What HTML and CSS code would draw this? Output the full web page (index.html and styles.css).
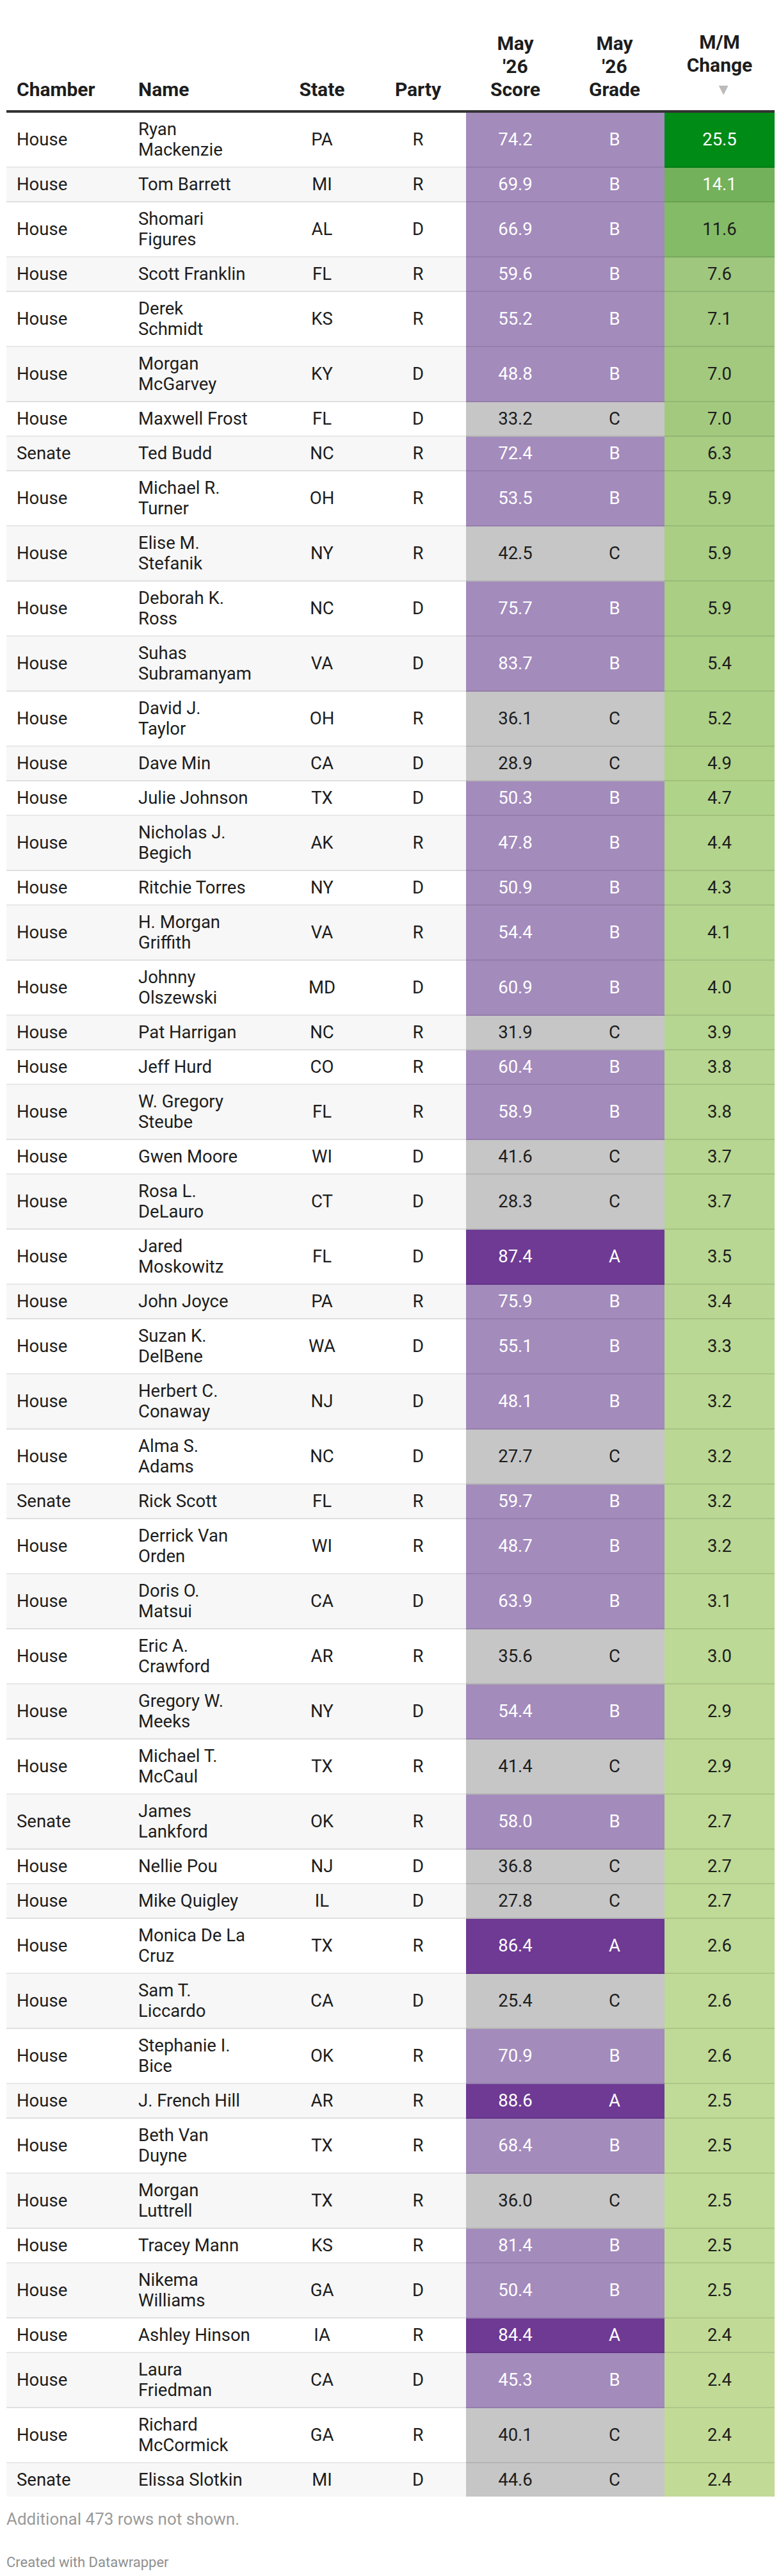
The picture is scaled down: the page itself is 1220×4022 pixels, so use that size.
FILE: index.html
```html
<!DOCTYPE html>
<html lang="en">
<head>
<meta charset="utf-8">
<title>May '26 Scores</title>
<link rel="stylesheet" href="styles.css">
</head>
<body>
<div class="chart">
<table class="dw-table">
<colgroup>
<col class="c-chamber"><col class="c-name"><col class="c-state"><col class="c-party"><col class="c-score"><col class="c-grade"><col class="c-change">
</colgroup>
<thead>
<tr>
<th class="left">Chamber</th>
<th class="left">Name</th>
<th>State</th>
<th>Party</th>
<th>May<br>'26<br>Score</th>
<th>May<br>'26<br>Grade</th>
<th>M/M<br>Change<br><span class="sort">&#9660;</span></th>
</tr>
</thead>
<tbody>
<tr><td>House</td><td class="name">Ryan<br>Mackenzie</td><td class="c">PA</td><td class="c">R</td><td class="c g-b">74.2</td><td class="c g-b">B</td><td class="c chg light" style="background:#008a16">25.5</td></tr>
<tr><td>House</td><td class="name">Tom Barrett</td><td class="c">MI</td><td class="c">R</td><td class="c g-b">69.9</td><td class="c g-b">B</td><td class="c chg light" style="background:#73b15a">14.1</td></tr>
<tr><td>House</td><td class="name">Shomari<br>Figures</td><td class="c">AL</td><td class="c">D</td><td class="c g-b">66.9</td><td class="c g-b">B</td><td class="c chg" style="background:#84bb67">11.6</td></tr>
<tr><td>House</td><td class="name">Scott Franklin</td><td class="c">FL</td><td class="c">R</td><td class="c g-b">59.6</td><td class="c g-b">B</td><td class="c chg" style="background:#9fc77e">7.6</td></tr>
<tr><td>House</td><td class="name">Derek<br>Schmidt</td><td class="c">KS</td><td class="c">R</td><td class="c g-b">55.2</td><td class="c g-b">B</td><td class="c chg" style="background:#a2c97f">7.1</td></tr>
<tr><td>House</td><td class="name">Morgan<br>McGarvey</td><td class="c">KY</td><td class="c">D</td><td class="c g-b">48.8</td><td class="c g-b">B</td><td class="c chg" style="background:#a3c97f">7.0</td></tr>
<tr><td>House</td><td class="name">Maxwell Frost</td><td class="c">FL</td><td class="c">D</td><td class="c g-c">33.2</td><td class="c g-c">C</td><td class="c chg" style="background:#a3c97f">7.0</td></tr>
<tr><td>Senate</td><td class="name">Ted Budd</td><td class="c">NC</td><td class="c">R</td><td class="c g-b">72.4</td><td class="c g-b">B</td><td class="c chg" style="background:#a7cc82">6.3</td></tr>
<tr><td>House</td><td class="name">Michael R.<br>Turner</td><td class="c">OH</td><td class="c">R</td><td class="c g-b">53.5</td><td class="c g-b">B</td><td class="c chg" style="background:#a9ce84">5.9</td></tr>
<tr><td>House</td><td class="name">Elise M.<br>Stefanik</td><td class="c">NY</td><td class="c">R</td><td class="c g-c">42.5</td><td class="c g-c">C</td><td class="c chg" style="background:#a9ce84">5.9</td></tr>
<tr><td>House</td><td class="name">Deborah K.<br>Ross</td><td class="c">NC</td><td class="c">D</td><td class="c g-b">75.7</td><td class="c g-b">B</td><td class="c chg" style="background:#a9ce84">5.9</td></tr>
<tr><td>House</td><td class="name">Suhas<br>Subramanyam</td><td class="c">VA</td><td class="c">D</td><td class="c g-b">83.7</td><td class="c g-b">B</td><td class="c chg" style="background:#acd086">5.4</td></tr>
<tr><td>House</td><td class="name">David J.<br>Taylor</td><td class="c">OH</td><td class="c">R</td><td class="c g-c">36.1</td><td class="c g-c">C</td><td class="c chg" style="background:#add187">5.2</td></tr>
<tr><td>House</td><td class="name">Dave Min</td><td class="c">CA</td><td class="c">D</td><td class="c g-c">28.9</td><td class="c g-c">C</td><td class="c chg" style="background:#afd288">4.9</td></tr>
<tr><td>House</td><td class="name">Julie Johnson</td><td class="c">TX</td><td class="c">D</td><td class="c g-b">50.3</td><td class="c g-b">B</td><td class="c chg" style="background:#b0d38a">4.7</td></tr>
<tr><td>House</td><td class="name">Nicholas J.<br>Begich</td><td class="c">AK</td><td class="c">R</td><td class="c g-b">47.8</td><td class="c g-b">B</td><td class="c chg" style="background:#b2d48c">4.4</td></tr>
<tr><td>House</td><td class="name">Ritchie Torres</td><td class="c">NY</td><td class="c">D</td><td class="c g-b">50.9</td><td class="c g-b">B</td><td class="c chg" style="background:#b3d48d">4.3</td></tr>
<tr><td>House</td><td class="name">H. Morgan<br>Griffith</td><td class="c">VA</td><td class="c">R</td><td class="c g-b">54.4</td><td class="c g-b">B</td><td class="c chg" style="background:#b4d58e">4.1</td></tr>
<tr><td>House</td><td class="name">Johnny<br>Olszewski</td><td class="c">MD</td><td class="c">D</td><td class="c g-b">60.9</td><td class="c g-b">B</td><td class="c chg" style="background:#b5d58f">4.0</td></tr>
<tr><td>House</td><td class="name">Pat Harrigan</td><td class="c">NC</td><td class="c">R</td><td class="c g-c">31.9</td><td class="c g-c">C</td><td class="c chg" style="background:#b5d690">3.9</td></tr>
<tr><td>House</td><td class="name">Jeff Hurd</td><td class="c">CO</td><td class="c">R</td><td class="c g-b">60.4</td><td class="c g-b">B</td><td class="c chg" style="background:#b6d691">3.8</td></tr>
<tr><td>House</td><td class="name">W. Gregory<br>Steube</td><td class="c">FL</td><td class="c">R</td><td class="c g-b">58.9</td><td class="c g-b">B</td><td class="c chg" style="background:#b6d691">3.8</td></tr>
<tr><td>House</td><td class="name">Gwen Moore</td><td class="c">WI</td><td class="c">D</td><td class="c g-c">41.6</td><td class="c g-c">C</td><td class="c chg" style="background:#b7d691">3.7</td></tr>
<tr><td>House</td><td class="name">Rosa L.<br>DeLauro</td><td class="c">CT</td><td class="c">D</td><td class="c g-c">28.3</td><td class="c g-c">C</td><td class="c chg" style="background:#b7d691">3.7</td></tr>
<tr><td>House</td><td class="name">Jared<br>Moskowitz</td><td class="c">FL</td><td class="c">D</td><td class="c g-a">87.4</td><td class="c g-a">A</td><td class="c chg" style="background:#b8d793">3.5</td></tr>
<tr><td>House</td><td class="name">John Joyce</td><td class="c">PA</td><td class="c">R</td><td class="c g-b">75.9</td><td class="c g-b">B</td><td class="c chg" style="background:#b9d793">3.4</td></tr>
<tr><td>House</td><td class="name">Suzan K.<br>DelBene</td><td class="c">WA</td><td class="c">D</td><td class="c g-b">55.1</td><td class="c g-b">B</td><td class="c chg" style="background:#b9d894">3.3</td></tr>
<tr><td>House</td><td class="name">Herbert C.<br>Conaway</td><td class="c">NJ</td><td class="c">D</td><td class="c g-b">48.1</td><td class="c g-b">B</td><td class="c chg" style="background:#bad894">3.2</td></tr>
<tr><td>House</td><td class="name">Alma S.<br>Adams</td><td class="c">NC</td><td class="c">D</td><td class="c g-c">27.7</td><td class="c g-c">C</td><td class="c chg" style="background:#bad894">3.2</td></tr>
<tr><td>Senate</td><td class="name">Rick Scott</td><td class="c">FL</td><td class="c">R</td><td class="c g-b">59.7</td><td class="c g-b">B</td><td class="c chg" style="background:#bad894">3.2</td></tr>
<tr><td>House</td><td class="name">Derrick Van<br>Orden</td><td class="c">WI</td><td class="c">R</td><td class="c g-b">48.7</td><td class="c g-b">B</td><td class="c chg" style="background:#bad894">3.2</td></tr>
<tr><td>House</td><td class="name">Doris O.<br>Matsui</td><td class="c">CA</td><td class="c">D</td><td class="c g-b">63.9</td><td class="c g-b">B</td><td class="c chg" style="background:#bbd894">3.1</td></tr>
<tr><td>House</td><td class="name">Eric A.<br>Crawford</td><td class="c">AR</td><td class="c">R</td><td class="c g-c">35.6</td><td class="c g-c">C</td><td class="c chg" style="background:#bcd995">3.0</td></tr>
<tr><td>House</td><td class="name">Gregory W.<br>Meeks</td><td class="c">NY</td><td class="c">D</td><td class="c g-b">54.4</td><td class="c g-b">B</td><td class="c chg" style="background:#bdd995">2.9</td></tr>
<tr><td>House</td><td class="name">Michael T.<br>McCaul</td><td class="c">TX</td><td class="c">R</td><td class="c g-c">41.4</td><td class="c g-c">C</td><td class="c chg" style="background:#bdd995">2.9</td></tr>
<tr><td>Senate</td><td class="name">James<br>Lankford</td><td class="c">OK</td><td class="c">R</td><td class="c g-b">58.0</td><td class="c g-b">B</td><td class="c chg" style="background:#beda96">2.7</td></tr>
<tr><td>House</td><td class="name">Nellie Pou</td><td class="c">NJ</td><td class="c">D</td><td class="c g-c">36.8</td><td class="c g-c">C</td><td class="c chg" style="background:#beda96">2.7</td></tr>
<tr><td>House</td><td class="name">Mike Quigley</td><td class="c">IL</td><td class="c">D</td><td class="c g-c">27.8</td><td class="c g-c">C</td><td class="c chg" style="background:#beda96">2.7</td></tr>
<tr><td>House</td><td class="name">Monica De La<br>Cruz</td><td class="c">TX</td><td class="c">R</td><td class="c g-a">86.4</td><td class="c g-a">A</td><td class="c chg" style="background:#bfda96">2.6</td></tr>
<tr><td>House</td><td class="name">Sam T.<br>Liccardo</td><td class="c">CA</td><td class="c">D</td><td class="c g-c">25.4</td><td class="c g-c">C</td><td class="c chg" style="background:#bfda96">2.6</td></tr>
<tr><td>House</td><td class="name">Stephanie I.<br>Bice</td><td class="c">OK</td><td class="c">R</td><td class="c g-b">70.9</td><td class="c g-b">B</td><td class="c chg" style="background:#bfda96">2.6</td></tr>
<tr><td>House</td><td class="name">J. French Hill</td><td class="c">AR</td><td class="c">R</td><td class="c g-a">88.6</td><td class="c g-a">A</td><td class="c chg" style="background:#c0db97">2.5</td></tr>
<tr><td>House</td><td class="name">Beth Van<br>Duyne</td><td class="c">TX</td><td class="c">R</td><td class="c g-b">68.4</td><td class="c g-b">B</td><td class="c chg" style="background:#c0db97">2.5</td></tr>
<tr><td>House</td><td class="name">Morgan<br>Luttrell</td><td class="c">TX</td><td class="c">R</td><td class="c g-c">36.0</td><td class="c g-c">C</td><td class="c chg" style="background:#c0db97">2.5</td></tr>
<tr><td>House</td><td class="name">Tracey Mann</td><td class="c">KS</td><td class="c">R</td><td class="c g-b">81.4</td><td class="c g-b">B</td><td class="c chg" style="background:#c0db97">2.5</td></tr>
<tr><td>House</td><td class="name">Nikema<br>Williams</td><td class="c">GA</td><td class="c">D</td><td class="c g-b">50.4</td><td class="c g-b">B</td><td class="c chg" style="background:#c0db97">2.5</td></tr>
<tr><td>House</td><td class="name">Ashley Hinson</td><td class="c">IA</td><td class="c">R</td><td class="c g-a">84.4</td><td class="c g-a">A</td><td class="c chg" style="background:#c1db97">2.4</td></tr>
<tr><td>House</td><td class="name">Laura<br>Friedman</td><td class="c">CA</td><td class="c">D</td><td class="c g-b">45.3</td><td class="c g-b">B</td><td class="c chg" style="background:#c1db97">2.4</td></tr>
<tr><td>House</td><td class="name">Richard<br>McCormick</td><td class="c">GA</td><td class="c">R</td><td class="c g-c">40.1</td><td class="c g-c">C</td><td class="c chg" style="background:#c1db97">2.4</td></tr>
<tr><td>Senate</td><td class="name">Elissa Slotkin</td><td class="c">MI</td><td class="c">D</td><td class="c g-c">44.6</td><td class="c g-c">C</td><td class="c chg" style="background:#c1db97">2.4</td></tr>
</tbody>
</table>
<p class="notes">Additional 473 rows not shown.</p>
<p class="credit">Created with Datawrapper</p>
</div>
</body>
</html>
```

FILE: styles.css
```css
html, body {
  margin: 0;
  padding: 0;
  background: #ffffff;
}

.chart {
  padding: 40px 10px 0 10px;
  font-family: Roboto, "Liberation Sans", Arial, sans-serif;
  color: #1d1d1d;
}

.dw-table {
  width: 1200px;
  table-layout: fixed;
  border-collapse: separate;
  border-spacing: 0;
}

.c-chamber { width: 190px; }
.c-name { width: 228px; }
.c-state { width: 150px; }
.c-party { width: 150px; }
.c-score { width: 154px; }
.c-grade { width: 156px; }
.c-change { width: 172px; }

.dw-table th {
  font-size: 30px;
  line-height: 36px;
  font-weight: 700;
  color: #1d1d1d;
  text-align: center;
  vertical-align: bottom;
  padding: 8px 16px 14px 16px;
  border-bottom: 4px solid #333333;
}

.dw-table th.left {
  text-align: left;
}

.sort {
  display: inline-block;
  color: #bbbbbb;
  font-size: 25px;
  line-height: 36px;
  margin-left: 12px;
}

.dw-table td {
  font-size: 27.5px;
  line-height: 32px;
  font-weight: 400;
  padding: 10px 16px;
  vertical-align: middle;
  text-align: left;
  border-bottom: 2px solid rgba(0, 0, 0, 0.09);
  white-space: nowrap;
}

.dw-table tbody tr:nth-child(even) td {
  background: #f7f7f7;
}

.dw-table tbody tr:last-child td {
  border-bottom: none;
}

.dw-table td.c {
  text-align: center;
}

.dw-table tbody tr td.g-a {
  background: #6e3a94;
  color: #ffffff;
}

.dw-table tbody tr td.g-b {
  background: #a38bbc;
  color: #ffffff;
}

.dw-table tbody tr td.g-c {
  background: #c6c6c6;
  color: #1d1d1d;
}

.dw-table td.chg {
  color: #1d1d1d;
}

.dw-table td.chg.light {
  color: #ffffff;
}

.notes {
  margin: 20px 0 0 0;
  font-size: 26px;
  line-height: 31px;
  color: #9a9a9a;
}

.credit {
  margin: 39px 0 0 0;
  font-size: 22px;
  line-height: 26px;
  color: #8f8f8f;
}
```
